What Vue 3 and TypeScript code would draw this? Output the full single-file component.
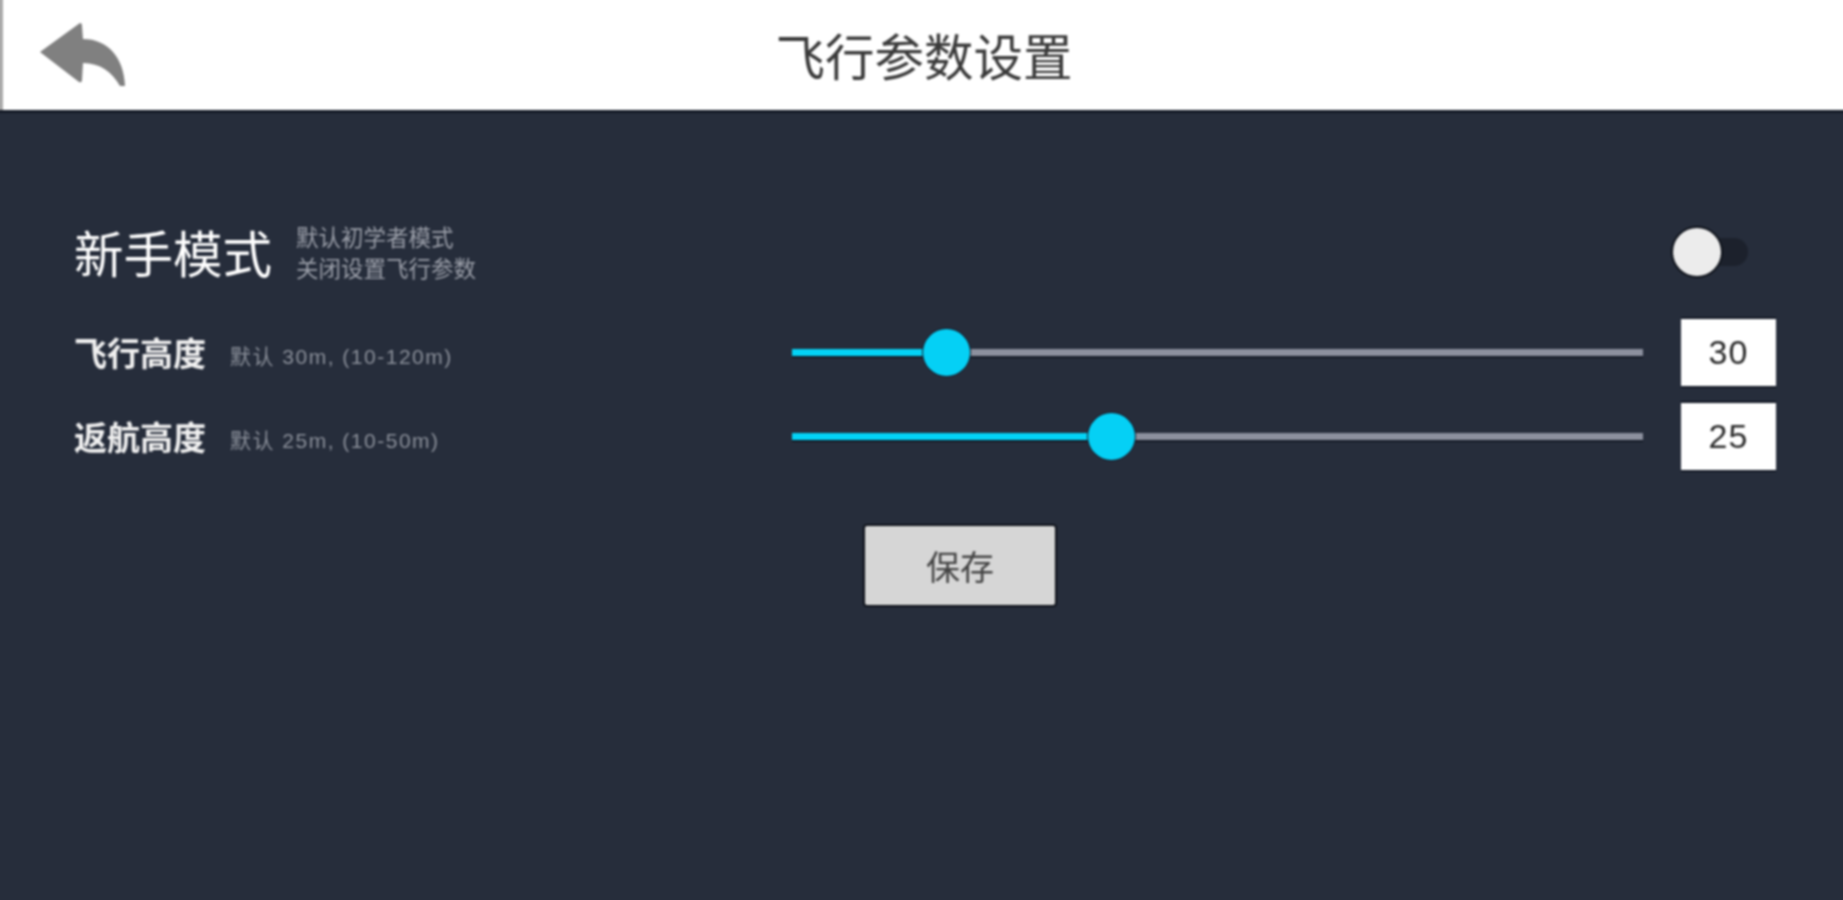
<script setup lang="ts">
const sliders = [
  { label: "飞行高度", hint: "默认 30m, (10-120m)", value: 30, percent: 18.1 },
  { label: "返航高度", hint: "默认 25m, (10-50m)", value: 25, percent: 37.5 },
];
</script>

<template>
  <div class="page">
    <header class="top">
      <svg class="back" width="90" height="70" viewBox="36 20 90 70" aria-hidden="true">
        <path d="M40 52 L80 23 Q82 23 82 26 L83 39 C108 39 124 58 125 86 L120 86 C112 72 100 63 83 63 L82 80 Q82 83 79 82 Z" fill="#808080" />
      </svg>
      <h1>飞行参数设置</h1>
    </header>

    <main class="content">
      <div class="mode">
        <div class="mode-text">
          <span class="mode-title">新手模式</span>
          <div class="mode-hint">
            <p>默认初学者模式</p>
            <p>关闭设置飞行参数</p>
          </div>
        </div>
        <div class="switch"><span class="knob"></span></div>
      </div>

      <div v-for="s in sliders" :key="s.label" class="row">
        <div class="row-text">
          <span class="row-label">{{ s.label }}</span>
          <span class="row-hint">{{ s.hint }}</span>
        </div>
        <div class="slider">
          <div class="fill" :style="{ width: s.percent + '%' }">
            <span class="thumb"></span>
          </div>
        </div>
        <div class="value">{{ s.value }}</div>
      </div>

      <button class="save">保存</button>
    </main>
  </div>
</template>

<style scoped>
/* 4px bleed past the window on every side so the blur leaves no edge line */
.page {
  width: 1851px;
  height: 908px;
  margin: -4px;
  overflow: hidden;
  display: flex;
  flex-direction: column;
  background: #262d3b;
  font-family: "Noto Sans CJK SC", "Liberation Sans", sans-serif;
  filter: blur(1px);
}

.top {
  position: relative;
  height: 114px;
  flex: none;
  display: flex;
  align-items: center;
  justify-content: center;
  padding: 4px 2px 0 0;
  box-sizing: border-box;
  background: #fff;
  border-left: 7px solid #a9a9a9;
  box-shadow: 0 3px 0 #141a26;
}

.back {
  position: absolute;
  left: 33px;
  top: 24px;
}

h1 {
  margin: 0;
  font-size: 49.5px;
  font-weight: 400;
  line-height: 1;
  color: #3a3a3a;
}

.content {
  display: flex;
  flex-direction: column;
  padding: 114px 71px 0 78px;
}

.mode {
  height: 56px;
  display: flex;
  align-items: center;
  justify-content: space-between;
  padding-right: 28px;
  margin-bottom: 38px;
}

.mode-text {
  display: flex;
  align-items: center;
  gap: 24px;
}

.mode-title {
  font-size: 49.5px;
  line-height: 56px;
  color: #fff;
}

.mode-hint p {
  margin: 0;
  font-size: 22.5px;
  line-height: 31px;
  color: #9a9ea8;
}

.switch {
  position: relative;
  width: 75px;
  height: 28px;
  border-radius: 14px;
  background: #1c212c;
}

.knob {
  position: absolute;
  left: 0;
  top: -10px;
  width: 48px;
  height: 48px;
  border-radius: 50%;
  background: #ececec;
  box-shadow: 0 0 0 2px #0e121a;
}

.row {
  height: 68px;
  display: grid;
  grid-template-columns: 718px 851px 96px;
  align-items: center;
  margin-bottom: 16px;
}

.row-text {
  display: flex;
  align-items: center;
  gap: 24px;
}

.row-label {
  font-size: 33px;
  font-weight: 700;
  color: #f0f0f0;
}

.row-hint {
  padding-top: 6px;
  font-family: "Liberation Sans", "Noto Sans CJK SC", sans-serif;
  font-size: 21px;
  letter-spacing: 1.5px;
  color: #8a8f99;
}

.slider {
  height: 7px;
  background: #8c909e;
  box-shadow: 0 2px 0 #141a26;
}

.fill {
  position: relative;
  height: 100%;
  background: #03d3f6;
}

.thumb {
  position: absolute;
  right: -24px;
  top: -20px;
  width: 47px;
  height: 47px;
  border-radius: 50%;
  background: #05d0f5;
  box-shadow: 0 0 0 1px #1a1a2a;
}

.value {
  grid-column: 3;
  margin-left: 38px;
  width: 95px;
  height: 67px;
  display: flex;
  align-items: center;
  justify-content: center;
  background: #fff;
  box-shadow: 0 -2px 0 #141a26, 0 2px 0 #141a26;
  font-family: "Liberation Sans", sans-serif;
  font-size: 34px;
  letter-spacing: 1px;
  color: #2a2a2a;
}

.save {
  align-self: flex-start;
  margin: 40px 0 0 791px;
  width: 190px;
  height: 79px;
  border: 0;
  border-radius: 2px;
  background: #d6d6d6;
  box-shadow: 0 0 0 2px #0e121a;
  font-family: inherit;
  font-size: 34px;
  color: #444;
}
</style>

<style>
html,
body {
  margin: 0;
  overflow: hidden;
  background: #262d3b;
}
</style>
